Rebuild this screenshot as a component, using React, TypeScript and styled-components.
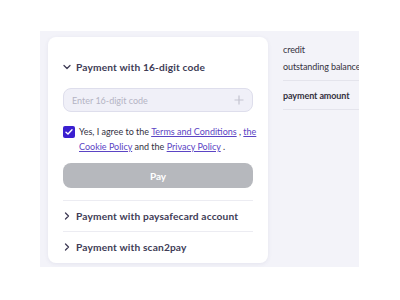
import React from "react";
import styled, { createGlobalStyle } from "styled-components";

const Global = createGlobalStyle`
  html, body { margin: 0; padding: 0; background: #ffffff; }
  body { font-family: "Lato", "Open Sans", sans-serif; }
`;

const Page = styled.div`
  width: 400px;
  height: 300px;
  padding: 31px 0 0 40px;
  box-sizing: border-box;
`;

const Panel = styled.div`
  width: 319px;
  height: 236px;
  background: #f3f3f9;
  display: flex;
  align-items: flex-start;
  gap: 15px;
  padding: 6px 0 0 8px;
  box-sizing: border-box;
  overflow: hidden;
`;

const Card = styled.div`
  width: 220px;
  height: 226px;
  flex-shrink: 0;
  background: #ffffff;
  border-radius: 8px;
  box-shadow: 0 1px 4px rgba(60, 60, 110, 0.08);
  padding: 20px 15px 0 15px;
  box-sizing: border-box;
  display: flex;
  flex-direction: column;
`;

const SectionHead = styled.div`
  display: flex;
  align-items: center;
  gap: 5px;
  height: 20px;
  font-size: 10.2px;
  font-weight: 700;
  color: #403c56;
  letter-spacing: 0.15px;
`;

const Chevron = styled.svg`
  width: 8px;
  height: 8px;
  flex-shrink: 0;
`;

const InputBox = styled.div`
  margin-top: 11px;
  height: 24px;
  border-radius: 8px;
  background: #f0f0f8;
  border: 1px solid #dedeec;
  box-sizing: border-box;
  display: flex;
  align-items: center;
  justify-content: space-between;
  padding: 0 8px;
  font-size: 9px;
  color: #b4b4c4;
`;

const Agree = styled.div`
  margin-top: 14px;
  display: flex;
  gap: 4px;
  align-items: flex-start;
`;

const Check = styled.div`
  width: 12px;
  height: 12px;
  border-radius: 2px;
  background: #3a1fd0;
  flex-shrink: 0;
  display: flex;
  align-items: center;
  justify-content: center;
`;

const AgreeText = styled.div`
  font-size: 9px;
  line-height: 15px;
  color: #34313f;
  margin-top: -2px;
  white-space: nowrap;
`;

const Link = styled.a`
  color: #5b44c4;
  text-decoration: underline;
`;

const PayButton = styled.div`
  margin-top: 9px;
  height: 25px;
  border-radius: 8px;
  background: #b6b8bd;
  color: #ffffff;
  font-size: 10px;
  font-weight: 700;
  display: flex;
  align-items: center;
  justify-content: center;
`;

const Divider = styled.div`
  height: 1px;
  background: #ececf2;
`;

const Collapsed = styled.div`
  margin-top: 12px;
  display: flex;
  flex-direction: column;
`;

const Row = styled(SectionHead)`
  height: 30px;
`;

const Side = styled.div`
  flex: 1;
  padding-top: 4px;
  font-size: 9px;
  letter-spacing: -0.1px;
  color: #35323f;
  white-space: nowrap;
`;

const SideLine = styled.div<{ $bold?: boolean }>`
  height: 17px;
  line-height: 17px;
  font-weight: ${(p) => (p.$bold ? 700 : 400)};
`;

const SideGroup = styled.div`
  border-bottom: 1px solid #e4e4ec;
  padding-bottom: 5px;
  margin-bottom: 6px;
`;

const Down = () => (
  <Chevron viewBox="0 0 8 8">
    <path d="M1 2.5 L4 5.5 L7 2.5" fill="none" stroke="#403c56" strokeWidth="1.3" strokeLinecap="round" strokeLinejoin="round" />
  </Chevron>
);

const Right = () => (
  <Chevron viewBox="0 0 8 8">
    <path d="M2.5 1 L5.5 4 L2.5 7" fill="none" stroke="#403c56" strokeWidth="1.3" strokeLinecap="round" strokeLinejoin="round" />
  </Chevron>
);

export default function App() {
  return (
    <>
      <Global />
      <Page>
        <Panel>
          <Card>
            <SectionHead>
              <Down />
              Payment with 16-digit code
            </SectionHead>
            <InputBox>
              <span>Enter 16-digit code</span>
              <svg width="10" height="10" viewBox="0 0 10 10">
                <path d="M5 0.5 V9.5 M0.5 5 H9.5" stroke="#c4c4d0" strokeWidth="1.2" />
              </svg>
            </InputBox>
            <Agree>
              <Check>
                <svg width="8" height="8" viewBox="0 0 8 8">
                  <path d="M1 4.2 L3 6 L7 1.8" fill="none" stroke="#fff" strokeWidth="1.4" strokeLinecap="round" strokeLinejoin="round" />
                </svg>
              </Check>
              <AgreeText>
                Yes, I agree to the <Link>Terms and Conditions</Link> , <Link>the</Link>
                <br />
                <Link>Cookie Policy</Link> and the <Link>Privacy Policy</Link> .
              </AgreeText>
            </Agree>
            <PayButton>Pay</PayButton>
            <Collapsed>
              <Divider />
              <Row>
                <Right />
                Payment with paysafecard account
              </Row>
              <Divider />
              <Row>
                <Right />
                Payment with scan2pay
              </Row>
            </Collapsed>
          </Card>
          <Side>
            <SideGroup>
              <SideLine>credit</SideLine>
              <SideLine>outstanding balance</SideLine>
            </SideGroup>
            <SideGroup>
              <SideLine $bold>payment amount</SideLine>
            </SideGroup>
          </Side>
        </Panel>
      </Page>
    </>
  );
}
